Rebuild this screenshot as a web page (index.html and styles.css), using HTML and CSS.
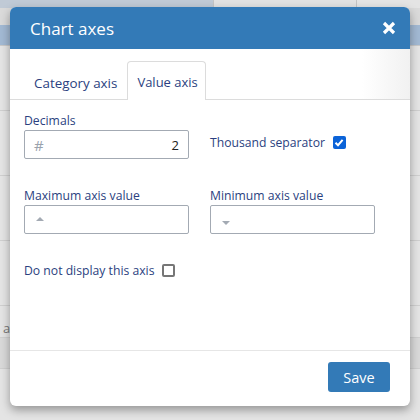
FILE: index.html
```html
<!DOCTYPE html>
<html>
<head>
<meta charset="utf-8">
<link rel="stylesheet" href="styles.css">
</head>
<body>
<div class="page">
  <div class="topbar"><div class="tb-left"></div><div class="tb-box"></div></div>
  <div class="bg-gap"></div>
  <div class="bg-blue"></div>
  <div class="bg-row"></div>
  <div class="bg-row"></div>
  <div class="bg-row"></div>
  <div class="bg-row"></div>
  <div class="bg-row bg-text">a</div>
  <div class="bg-row short"></div>
</div>

<div class="modal">
  <div class="modal-header">
    <span class="title">Chart axes</span>
    <svg class="close" width="14" height="14" viewBox="0 0 14 14"><path d="M2 2 L12 12 M12 2 L2 12" stroke="#fff" stroke-width="3.2" stroke-linecap="butt"/></svg>
  </div>
  <div class="tabs">
    <div class="tab">Category axis</div>
    <div class="tab active">Value axis</div>
  </div>
  <div class="modal-body">
    <div class="row">
      <div class="field">
        <label class="lbl">Decimals</label>
        <div class="input"><span class="hash">#</span><span class="val">2</span></div>
      </div>
      <div class="check-field">
        <span class="lbl">Thousand separator</span>
        <span class="cb checked"><svg width="10" height="9" viewBox="0 0 10 9"><path d="M1.5 4.8 L4 7.2 L8.6 1.8" fill="none" stroke="#fff" stroke-width="2"/></svg></span>
      </div>
    </div>
    <div class="row second">
      <div class="field">
        <label class="lbl">Maximum axis value</label>
        <div class="input"><span class="arrow up"></span></div>
      </div>
      <div class="field">
        <label class="lbl">Minimum axis value</label>
        <div class="input"><span class="arrow down"></span></div>
      </div>
    </div>
    <div class="check-line">
      <span class="lbl">Do not display this axis</span>
      <span class="cb"></span>
    </div>
  </div>
  <div class="modal-footer">
    <button class="save">Save</button>
  </div>
</div>
</body>
</html>
```
FILE: styles.css
```css
html, body {
  margin: 0;
  padding: 0;
  width: 420px;
  height: 420px;
  overflow: hidden;
  background: #e4e4e4;
  font-family: "Open Sans", "DejaVu Sans", sans-serif;
}
.page {
  display: flex;
  flex-direction: column;
}
.topbar {
  display: flex;
  height: 8px;
}
.tb-left {
  width: 213px;
  background: #c0cad6;
}
.tb-box {
  width: 144px;
  border: 1px solid #c4c4c4;
  border-top: none;
  background: #e2e2e2;
  box-sizing: border-box;
}
.bg-gap {
  height: 17px;
  background: #dadada;
}
.bg-blue {
  height: 20px;
  background: #a2b9d3;
  border-bottom: 1px solid #c8c8c8;
}
.bg-row {
  height: 64px;
  border-bottom: 1px solid #cfcfcf;
  background: #e4e4e4;
  font-size: 13px;
  color: #777;
}
.bg-text {
  height: 32px;
  display: flex;
  align-items: flex-end;
  padding-left: 3px;
  box-sizing: border-box;
}
.short {
  height: 30px;
  background: #d9d9d9;
}

.modal {
  position: absolute;
  left: 10px;
  top: 7px;
  width: 400px;
  height: 399px;
  background: #fff;
  border-radius: 6px;
  box-shadow: 0 4px 10px rgba(0,0,0,0.35);
  display: flex;
  flex-direction: column;
  overflow: hidden;
}
.modal-header {
  height: 42px;
  background: #337ab7;
  display: flex;
  align-items: center;
  justify-content: space-between;
  padding: 0 14px 0 20px;
  flex-shrink: 0;
}
.title {
  color: #fff;
  font-size: 17px;
}
.close {
  margin-top: -1px;
}
.tabs {
  height: 51px;
  box-sizing: border-box;
  display: flex;
  align-items: flex-end;
  padding-left: 14px;
  border-bottom: 1px solid #dcdcdc;
  background: linear-gradient(to right, #fff 88%, #f1f1f1 100%);
  flex-shrink: 0;
}
.tab {
  height: 38px;
  box-sizing: border-box;
  padding: 2px 9px 0 9px;
  display: flex;
  align-items: center;
  font-size: 13.4px;
  color: #2b3f80;
  margin-bottom: -1px;
  border: 1px solid transparent;
  border-bottom: none;
  border-radius: 4px 4px 0 0;
}
.tab.active {
  border-color: #dcdcdc;
  background: #fff;
  height: 39px;
  padding: 2px 7px 0 9px;
  font-size: 13px;
}
.modal-body {
  flex: 1;
  padding: 12px 14px 0 14px;
  display: flex;
  flex-direction: column;
}
.row {
  display: flex;
  gap: 21px;
  margin-bottom: 28px;
}
.row.second {
  margin-bottom: 17px;
}
.field {
  width: 165px;
  display: flex;
  flex-direction: column;
}
.lbl {
  font-size: 12.2px;
  color: #2b3f80;
  line-height: 17px;
}
.input {
  margin-top: 1px;
  height: 29px;
  box-sizing: border-box;
  border: 1px solid #a3aab3;
  border-radius: 2px;
  display: flex;
  align-items: center;
  justify-content: space-between;
  padding: 0 9px 0 9px;
}
.hash {
  color: #9aa2ad;
  font-size: 15px;
}
.val {
  color: #222;
  font-size: 13px;
}
.arrow {
  width: 0;
  height: 0;
  border-left: 4px solid transparent;
  border-right: 4px solid transparent;
  margin-left: 2px;
}
.arrow.up {
  border-bottom: 4px solid #a3aab3;
  margin-top: -2px;
}
.arrow.down {
  border-top: 4px solid #a3aab3;
  margin-top: 6px;
}
.check-field {
  display: flex;
  align-items: center;
  gap: 8px;
  margin-top: 22px;
  align-self: flex-start;
}
.cb {
  width: 13px;
  height: 13px;
  box-sizing: border-box;
  border: 2px solid #767676;
  border-radius: 2px;
  display: inline-flex;
  align-items: center;
  justify-content: center;
}
.cb.checked {
  background: #0b63d8;
  border: none;
}
.check-line {
  display: flex;
  align-items: center;
  gap: 8px;
  margin-top: 11px;
}
.modal-footer {
  height: 56px;
  box-sizing: border-box;
  border-top: 1px solid #e6e6e6;
  display: flex;
  align-items: flex-start;
  justify-content: flex-end;
  padding: 11px 20px 0 0;
  flex-shrink: 0;
}
.save {
  width: 62px;
  height: 30px;
  background: #337ab7;
  color: #fff;
  border: none;
  border-radius: 3px;
  font-family: "Open Sans", "DejaVu Sans", sans-serif;
  font-size: 14.5px;
  padding: 0;
}
```
